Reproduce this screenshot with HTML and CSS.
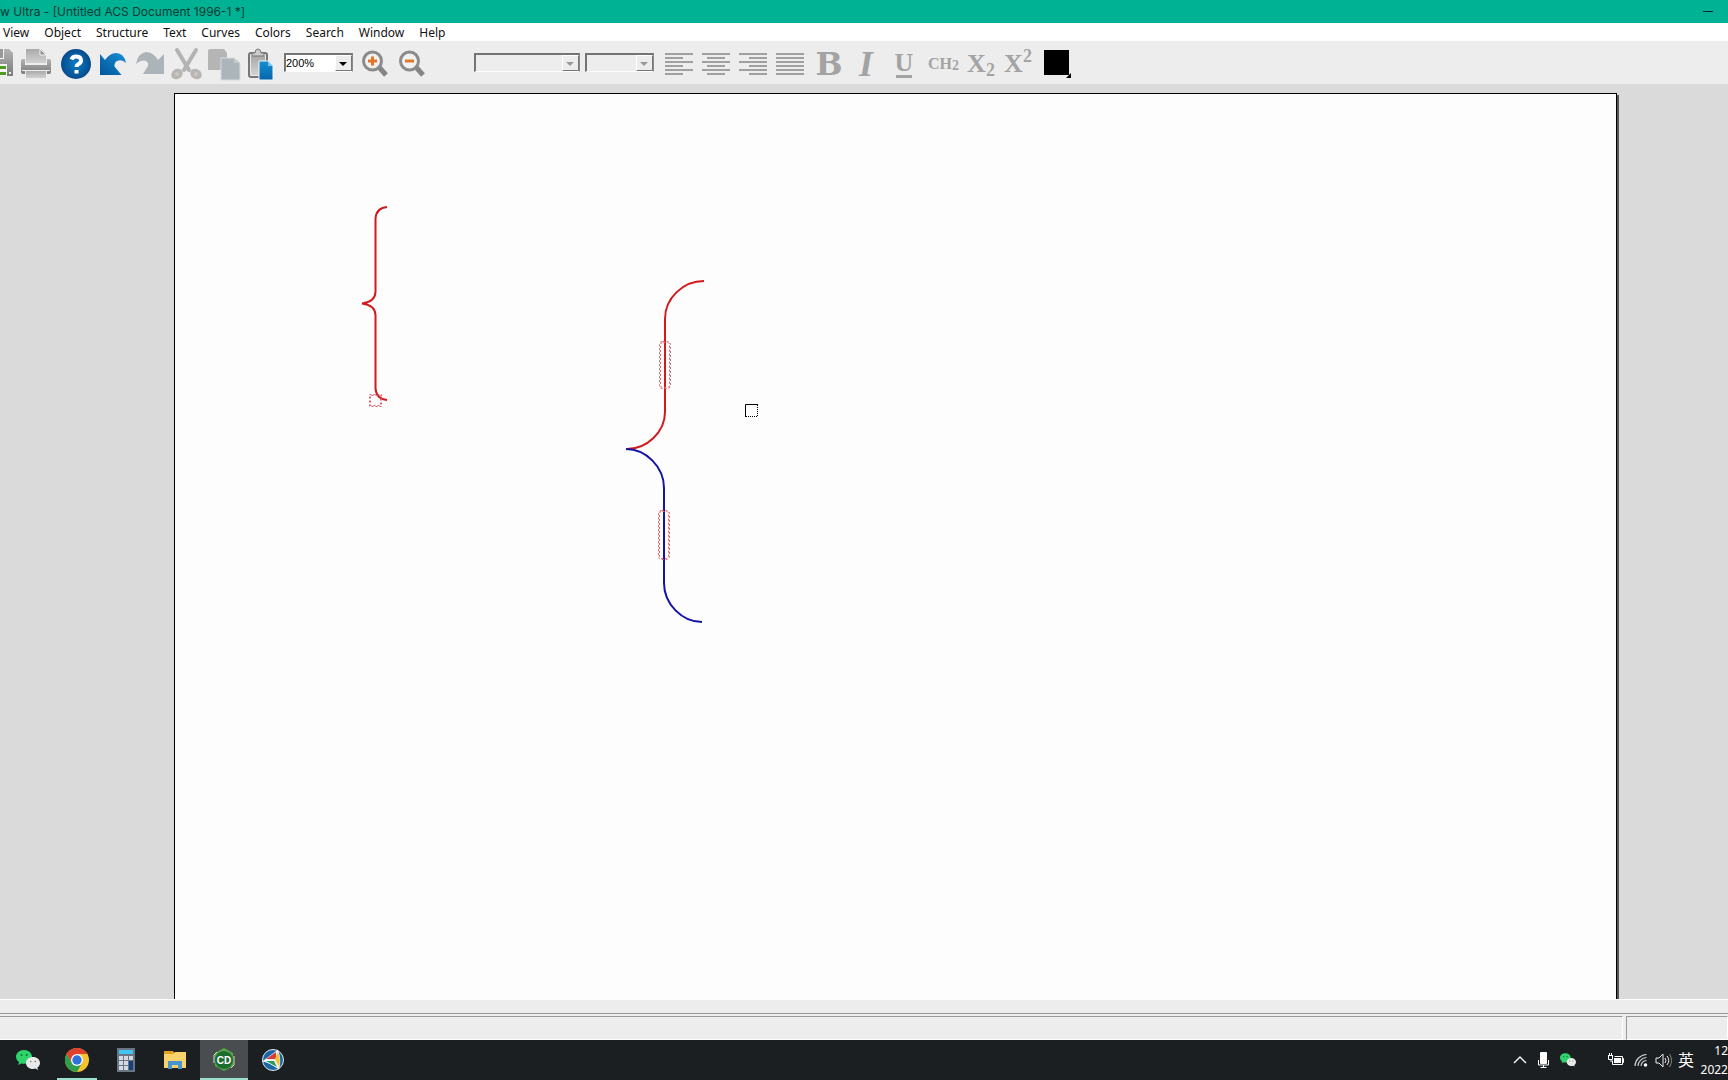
FILE: index.html
```html
<!DOCTYPE html>
<html lang="en">
<head>
<meta charset="utf-8">
<title>Untitled ACS Document 1996-1</title>
<link rel="stylesheet" href="styles.css">
</head>
<body>
<svg class="defs" aria-hidden="true">
  <defs>
    <linearGradient id="grey" x1="0" y1="0" x2="0" y2="1"><stop offset="0" stop-color="#b4b4b4"/><stop offset="1" stop-color="#7b7b7b"/></linearGradient>
    <linearGradient id="pale" x1="0" y1="0" x2="0" y2="1"><stop offset="0" stop-color="#a9a9a9"/><stop offset="1" stop-color="#d2d2d2"/></linearGradient>
    <radialGradient id="blue"><stop offset="0" stop-color="#0c7fc9"/><stop offset="1" stop-color="#064a8c"/></radialGradient>
    <linearGradient id="undo" x1="0" y1="1" x2="1" y2="0"><stop offset="0" stop-color="#04549a"/><stop offset="1" stop-color="#1790d4"/></linearGradient>
    <linearGradient id="sheet" x1="0" y1="0" x2="0" y2="1"><stop offset="0" stop-color="#1590d2"/><stop offset="1" stop-color="#0563ab"/></linearGradient>
    <symbol id="wechat" viewBox="0 0 24 20">
      <path d="M8 0C3.400 0 0 3 0 6.800c0 2.200 1.200 4 3 5.300L2.300 15l3-1.600c1 .3 2 .4 3.200.4C13 13.600 16 10.600 16 6.800S12.600 0 8 0z" fill="#2fd36b"/>
      <circle cx="5.500" cy="5" r="1" fill="#14713a"/><circle cx="10.700" cy="5" r="1" fill="#14713a"/>
      <path d="M17 7c-4 0-7 2.600-7 6s3 6 7 6c.9 0 1.700-.1 2.500-.4l2.500 1.300-.6-2.300c1.600-1.100 2.600-2.700 2.600-4.600 0-3.400-3-6-7-6z" fill="#e9e9e9"/>
      <circle cx="14.700" cy="11.500" r=".8" fill="#777"/><circle cx="19.300" cy="11.500" r=".8" fill="#777"/>
    </symbol>
  </defs>
</svg>

<header class="titlebar">
  <span>w Ultra - [Untitled ACS Document 1996-1 *]</span>
  <button class="minimize" aria-label="Minimize"></button>
</header>

<nav class="menubar">
  <button>View</button><button>Object</button><button>Structure</button><button>Text</button><button>Curves</button><button>Colors</button><button>Search</button><button>Window</button><button>Help</button>
</nav>

<div class="toolbar">
  <button class="tool save" aria-label="Save">
    <svg width="17" height="36"><path d="M0 3h9l4 4v23H0z" fill="url(#grey)"/><path d="M0 3h4v10H0zM0 18h7v12H0z" fill="#f4f4f4"/><path d="M0 3h3v9H0z" fill="#999"/><path d="M0 20h6v3H0zM0 26h6v3H0z" fill="#4f9a22"/><path d="M9 26h2v2H9z" fill="#eee"/></svg>
  </button>
  <button class="tool print" aria-label="Print">
    <svg width="37" height="36"><path d="M10 3h14l5 5v9H9V3z" fill="url(#pale)"/><path d="M23 3v6h6z" fill="#8e8e8e" stroke="#f4f4f4"/><path d="M6 13h2v6h22v-6h2q2 0 2 2v11q0 2-2 2h-2v-4H8v4H6q-2 0-2-2V15q0-2 2-2z" fill="url(#grey)"/><path d="M9 25h20v7H9z" fill="url(#pale)"/><path d="M5 24.500h28" stroke="#eee"/></svg>
  </button>
  <button class="tool" aria-label="Help">
    <svg width="37" height="36"><circle cx="19" cy="18" r="15" fill="url(#blue)"/><path d="M14.500 13.500q1-3 4.700-3 4.800 0 4.800 4 0 2.300-2.400 3.500-2 1-2 3" fill="none" stroke="#fff" stroke-width="4"/><path d="M17.500 24h4v3.500h-4z" fill="#fff"/></svg>
  </button>
  <button class="tool" aria-label="Undo">
    <svg width="37" height="36"><path d="M6 8l5 6Q16 7 22 7q8 0 10 10-4-4-9-2-3 2-2.500 5.500l7 8.500H6z" fill="url(#undo)"/></svg>
  </button>
  <button class="tool" aria-label="Redo">
    <svg width="37" height="36"><path d="M33 8l-6 6Q22 6 15 6 7 7 5 18q5-5 10-3 3 2 2 5l-5 8h21z" fill="#aab4b9"/></svg>
  </button>
  <button class="tool" aria-label="Cut">
    <svg width="37" height="36"><path d="M9 4l12 20M28 4L16 24" stroke="#b3b3b3" stroke-width="4" stroke-linecap="round"/><ellipse cx="9" cy="28" rx="6" ry="5" fill="#b8b5b3" transform="rotate(-35 9 28)"/><ellipse cx="28" cy="28" rx="6" ry="5" fill="#b8b5b3" transform="rotate(35 28 28)"/><circle cx="9" cy="28" r="2" fill="#c9c6c4"/><circle cx="28" cy="28" r="2" fill="#c9c6c4"/></svg>
  </button>
  <button class="tool" aria-label="Copy">
    <svg width="37" height="36"><path d="M5 3h14l3 4v17H3V5q0-2 2-2z" fill="#b5b5b5"/><path d="M16 12h13l6 5v17H16z" fill="#abb5ba" stroke="#d8dcde"/><path d="M29 12v5h6z" fill="#c4cbce"/></svg>
  </button>
  <button class="tool" aria-label="Paste">
    <svg width="37" height="36"><rect x="7" y="7" width="18" height="24" rx="2" fill="#e8e8e8" stroke="#777" stroke-width="2"/><path d="M9 10h14v19H9z" fill="url(#pale)"/><path d="M10 10V7h3q0-4 3-4t3 4h3v3z" fill="#ccc" stroke="#777"/><path d="M17 15h9l5 5v14H17z" fill="url(#sheet)" stroke="#f4f4f4"/><path d="M26 15v5h5" fill="#7cc2ee"/></svg>
  </button>
  <span class="combo zoom">
    <select aria-label="Zoom level"><option>200%</option></select>
    <svg class="arrow" width="17" height="16"><path d="M3 6h8l-4 4z"/></svg>
  </span>
  <button class="tool zoom-in" aria-label="Zoom in">
    <svg width="37" height="36"><path d="M21 20l8 9" stroke="#858585" stroke-width="5"/><circle cx="15.500" cy="15" r="9" fill="#f3f1ef" stroke="#8b8b8b" stroke-width="3"/><path d="M11 15h9M15.500 10.500v9" stroke="#e2762e" stroke-width="3"/></svg>
  </button>
  <button class="tool" aria-label="Zoom out">
    <svg width="37" height="36"><path d="M21 20l8 9" stroke="#858585" stroke-width="5"/><circle cx="15.500" cy="15" r="9" fill="#f3f1ef" stroke="#8b8b8b" stroke-width="3"/><path d="M11 15h9" stroke="#e2762e" stroke-width="3"/></svg>
  </button>
  <span class="combo font">
    <select aria-label="Font" disabled></select>
    <svg class="arrow" width="17" height="16"><path d="M3 6h8l-4 4z"/></svg>
  </span>
  <span class="combo size">
    <select aria-label="Font size" disabled></select>
    <svg class="arrow" width="17" height="16"><path d="M3 6h8l-4 4z"/></svg>
  </span>
  <button class="tool align" aria-label="Align left"><svg width="37" height="36"><path d="M4 8h28M4 12h18M4 16h28M4 20h18M4 24h28M4 28h18"/></svg></button>
  <button class="tool align" aria-label="Align center"><svg width="37" height="36"><path d="M4 8h28M9 12h18M4 16h28M9 20h18M4 24h28M9 28h18"/></svg></button>
  <button class="tool align" aria-label="Align right"><svg width="37" height="36"><path d="M4 8h28M14 12h18M4 16h28M14 20h18M4 24h28M14 28h18"/></svg></button>
  <button class="tool align" aria-label="Justify"><svg width="37" height="36"><path d="M4 8h28M4 12h28M4 16h28M4 20h28M4 24h28M4 28h28"/></svg></button>
  <button class="tool glyph bold">B</button>
  <button class="tool glyph italic">I</button>
  <button class="tool glyph underline"><span>U</span></button>
  <button class="tool glyph formula">CH<small>2</small></button>
  <button class="tool glyph script">X<sub>2</sub></button>
  <button class="tool glyph script">X<sup>2</sup></button>
  <button class="tool swatch" aria-label="Text color"><svg width="32" height="36"><path d="M3 4h25v25H3z"/><path d="M30 27v5h-5z"/></svg></button>
</div>

<main class="workspace">
  <div class="paper">
    <svg class="drawing" width="100%" height="100%">
      <g fill="none" stroke-width="2">
        <path d="M212 113Q201 114 200.500 125V198Q200 208 187 209.500Q200 211 200.500 221V294Q201 305 212 306" stroke="#d4191c"/>
        <path d="M529 187C508 187 490 204 490 225V318C490 338 472 355 452 355" stroke="#d4191c"/>
        <path d="M451 355C471 355 489 373 489 394V489C489 510 507 528 527 528" stroke="#1414a8"/>
      </g>
      <!-- scalloped selection handles: two interleaved dashed outlines each -->
      <g fill="none" stroke="#e0626a" stroke-dasharray="2 2">
        <rect x="194.500" y="300.500" width="12" height="12"/>
        <rect x="195.500" y="301.500" width="10" height="10" stroke-dashoffset="3"/>
        <rect x="484.500" y="247.500" width="11" height="47" rx="3"/>
        <rect x="485.500" y="248.500" width="9" height="45" rx="2" stroke-dashoffset="3"/>
        <rect x="483.500" y="416.500" width="11" height="49" rx="3"/>
        <rect x="484.500" y="417.500" width="9" height="47" rx="2" stroke-dashoffset="3"/>
      </g>
      <path d="M570.500 323V310.500H583" fill="none" stroke="#000"/>
      <path d="M582.500 311V323M571 322.500H583" fill="none" stroke="#000" stroke-dasharray="1 1"/>
    </svg>
  </div>
</main>

<footer class="status">
  <div class="panel message"></div>
  <div class="panel"></div>
</footer>

<div class="taskbar">
  <button class="app" aria-label="WeChat"><svg width="24" height="20"><use href="#wechat"/></svg></button>
  <button class="app running" aria-label="Chrome"><svg width="24" height="24" viewBox="0 0 24 24"><circle cx="12" cy="12" r="12" fill="#f5c32c"/><path d="M12 6h10.400A12 12 0 0 0 1.600 6l5.200 9z" fill="#e0402f"/><path d="M1.600 6A12 12 0 0 0 12 24l5.200-9H6.800z" fill="#2f9e4f"/><circle cx="12" cy="12" r="6" fill="#fff"/><circle cx="12" cy="12" r="4.700" fill="#2f72dc"/></svg></button>
  <button class="app" aria-label="Calculator"><svg width="18" height="24"><path d="M0 0h18v24H0z" fill="#687684"/><path d="M2 2h14v4H2z" fill="#42c4f0"/><path d="M2 8h4v4H2zM7 8h4v4H7zM12 8h4v4h-4zM2 13h4v4H2zM7 13h4v4H7zM2 18h4v4H2zM7 18h4v4H7z" fill="#d4dae0"/><path d="M12 13h4v9h-4z" fill="#17417c"/></svg></button>
  <button class="app" aria-label="File Explorer"><svg width="22" height="20"><path d="M0 1h9l2 3h11v14H0z" fill="#e2a020"/><path d="M0 4h9l2-2h11v16H0z" fill="#fad36c"/><path d="M4 19v-8h14v8h-4v-4H8v4z" fill="#4695cf"/></svg></button>
  <button class="app active" aria-label="ChemDraw"><svg width="24" height="24"><path d="M12 0l9 5v13l-9 5-9-5V5z" fill="#57a64a"/><circle cx="12" cy="12" r="9" fill="#1c6b2f"/><path d="M2 15V7l3-3M22 8v9l-3 3" fill="none" stroke="#c8e6c4" stroke-width="1"/><text x="12" y="16" text-anchor="middle" class="cd">CD</text></svg></button>
  <button class="app" aria-label="Viewer"><svg width="24" height="24"><circle cx="12" cy="12" r="10.500" fill="#1766a8" stroke="#dfe8ef"/><path d="M17 1.500q-5 4-16 12 5 0 17 8 3-9-1-20z" fill="#f4f4f4"/><path d="M15 4v7H5z" fill="#d93a40"/><path d="M17 4q3 7 1 15l-4-8z" fill="#f1c231"/><path d="M5 13h8l3 6z" fill="#2f9a57"/></svg></button>

  <div class="tray">
    <button class="t-chevron" aria-label="Show hidden icons"><svg width="14" height="20"><path d="M1 13l6-6 6 6" fill="none" stroke="#eee" stroke-width="1.500"/></svg></button>
    <button class="t-mic" aria-label="Microphone"><svg width="12" height="20"><rect x="3" y="2" width="7" height="12" rx="1" fill="#fff"/><path d="M1.500 10v5h10v-5M6.500 15v3M3.500 17.500h6" fill="none" stroke="#fff"/></svg></button>
    <button class="t-wechat" aria-label="WeChat status"><svg width="16" height="14"><use href="#wechat"/></svg></button>
    <button class="t-battery" aria-label="Battery"><svg width="17" height="20"><path d="M6.500 6.500h8v8H4.500v-4M14.500 8.500h1v4h-1M3 9v3M0 5.500h5M1.500 3v3M3.500 3v3M.5 6v3.500h4V6" fill="none" stroke="#fff"/><path d="M6 8h7v5H6z" fill="#fff"/></svg></button>
    <button class="t-wifi" aria-label="Network"><svg width="14" height="20"><path d="M1 16A12 12 0 0 1 12.500 4.500M4 16A9 9 0 0 1 12.500 7.500M7 16A6 6 0 0 1 12.500 10.500" fill="none" stroke="#ccc" stroke-width="1.200"/><circle cx="11.500" cy="15" r="1.800" fill="#fff"/></svg></button>
    <button class="t-sound" aria-label="Volume"><svg width="17" height="20"><path d="M1 8h3l4-4v13l-4-4H1zM10 8q2 2.500 0 5M12 6q3.500 4.500 0 9" fill="none" stroke="#eee"/><path d="M14.500 4q4 6.500 0 13" fill="none" stroke="#888"/></svg></button>
    <button class="ime">英</button>
    <button class="clock"><span>12</span><span>2022</span></button>
  </div>
</div>
</body>
</html>
```
FILE: styles.css
```css
* { box-sizing: border-box; }

html, body { height: 100%; margin: 0; }

body {
  display: flex;
  flex-direction: column;
  min-height: 100vh;
  overflow: hidden;
  background: #ededed;
  color: #111;
  font: 12px/18px "Noto Sans", "Noto Sans CJK SC", sans-serif;
}

button {
  margin: 0;
  padding: 0;
  border: 0;
  background: none;
  color: inherit;
  font: inherit;
}

svg { display: block; flex: none; }

.defs { position: absolute; width: 0; height: 0; }

.titlebar {
  display: flex;
  justify-content: space-between;
  align-items: center;
  height: 23px;
  padding-right: 15px;
  background: #00b294;
  color: #0b3b33;
  font-family: Inter, sans-serif;
}

.minimize { width: 10px; height: 1px; background: #123; }

.menubar {
  display: flex;
  gap: 15px;
  height: 18px;
  padding-left: 3px;
  background: #fff;
  line-height: 20px;
}

.toolbar {
  display: flex;
  align-items: center;
  height: 43px;
  padding-top: 2px;
  background: #ededed;
}

.tool { flex: none; height: 36px; min-width: 37px; }
.save { min-width: 17px; }
.print { margin-right: 3px; }

.combo {
  display: grid;
  flex: none;
  height: 19px;
  margin-bottom: 2px;
  border: 2px solid;
  border-color: #747474 #8a8a8a #fff #747474;
  border-right-width: 1px;
  border-bottom-width: 1px;
}
.combo > * { grid-area: 1 / 1; }
.combo select {
  appearance: none;
  width: 100%;
  margin: 0;
  padding: 0;
  border: 0;
  border-radius: 0;
  background: #fff;
  color: #000;
  font: 11px/15px "Liberation Sans", sans-serif;
}
.combo select:disabled { background: #ededed; opacity: 1; }
.combo select:disabled + .arrow path { fill: #999; }
.arrow {
  justify-self: end;
  border: 1px solid;
  border-color: #fff #777 #777 #fff;
  background: #ededed;
  pointer-events: none;
}
.zoom { width: 69px; margin-left: 5px; }
.zoom-in { margin-left: 4px; }
.font { width: 106px; margin-left: 43px; }
.size { width: 69px; margin-left: 5px; margin-right: 7px; }

.align path { stroke: #a0a0a0; stroke-width: 2; }

.glyph {
  color: #a3a3a3;
  font: bold 20px/36px "Liberation Serif", serif;
  text-align: center;
}
.bold { width: 40px; font: bold 32px/36px "DejaVu Serif", serif; }
.italic { width: 34px; min-width: 34px; font: italic bold 36px/36px "Liberation Serif", serif; }
.underline { width: 42px; font-size: 26px; }
.underline span {
  display: flex;
  justify-content: center;
  width: 16px;
  height: 28px;
  margin: 0 auto;
  border-bottom: 3px solid;
  line-height: 26px;
}
.formula { font-size: 16px; }
.formula small { font-size: 14px; vertical-align: -1px; line-height: 0; }
.script { width: 37px; padding-left: 1px; font-size: 26px; }
.script sub, .script sup { font-size: 18px; line-height: 0; }
.script sub { vertical-align: -4px; }
.swatch { min-width: 32px; margin-left: 5px; }

.workspace {
  display: flex;
  flex: 1;
  min-height: 0;
  padding: 9px 111px 0 174px;
  background: #dadada;
}
.paper {
  flex: 1;
  border: 1px solid #000;
  border-bottom: 0;
  background: #fdfdfd;
  box-shadow: 2px 2px 0 #555;
}

.status {
  display: flex;
  gap: 3px;
  height: 41px;
  padding-top: 14px;
  border-top: 1px solid #fff;
  background: linear-gradient(#ededed 13px, #999 13px, #999 14px, #ededed 14px);
}
.panel {
  flex: none;
  width: 102px;
  margin-top: 2px;
  border: 1px solid;
  border-color: #999 #fff #fff #999;
}
.panel.message { flex: 1; border-left: 0; }

.taskbar {
  display: flex;
  gap: 1px;
  height: 40px;
  padding-left: 4px;
  background: #1b1f21;
  color: #fff;
  overflow: hidden;
}
.app {
  display: flex;
  flex: none;
  justify-content: center;
  align-items: center;
  width: 48px;
  height: 40px;
}
.running { background: linear-gradient(#9be0cf, #9be0cf) 4px 38px / 40px 2px no-repeat; }
.active { background: linear-gradient(#4a4d4f 38px, #9be0cf 38px); }
.cd { fill: #fff; font: bold 10px "Liberation Sans", sans-serif; }

.tray {
  display: flex;
  align-items: center;
  width: 215px;
  margin-left: auto;
  flex: none;
}
.tray button { flex: none; }
.t-mic { margin-left: 10px; }
.t-wechat { margin-left: 11px; }
.t-battery { margin-left: 32px; }
.t-wifi { margin-left: 9px; }
.t-sound { margin-left: 7px; }
.tray .ime { width: 16px; margin-left: 6px; font-size: 16px; line-height: 24px; }
.clock {
  display: flex;
  flex-direction: column;
  align-items: flex-end;
  width: 27px;
  margin-left: auto;
  line-height: 19px;
}
```
